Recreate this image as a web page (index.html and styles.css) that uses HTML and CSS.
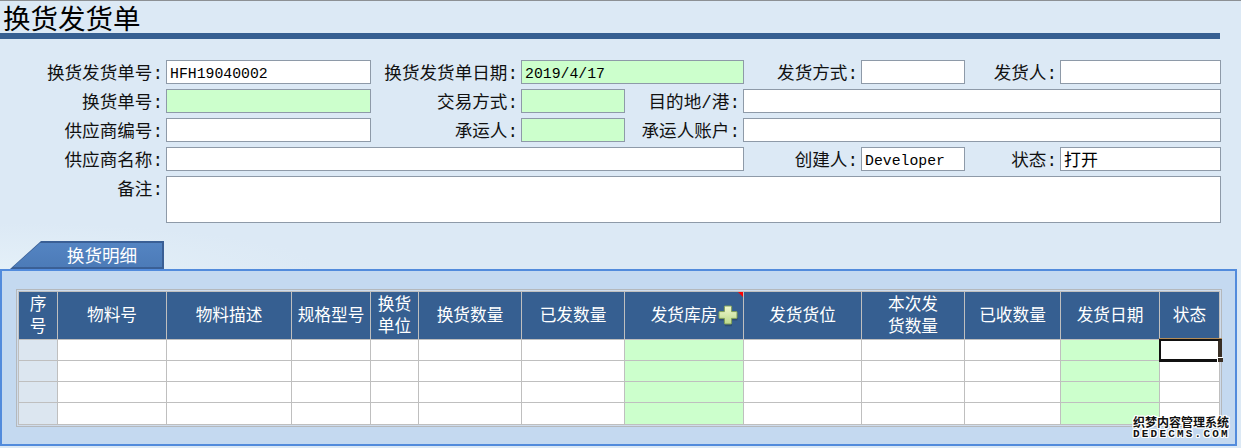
FILE: index.html
```html
<!DOCTYPE html>
<html lang="zh-CN">
<head>
<meta charset="utf-8">
<title>换货发货单</title>
<link rel="stylesheet" href="styles.css">
</head>
<body>
<h1 class="title">换货发货单</h1>
<form class="form">
  <label class="lb c-a">换货发货单号:</label>
  <input class="fld mono c-b" value="HFH19040002">
  <label class="lb c-c">换货发货单日期:</label>
  <input class="fld mono req c-de" value="2019/4/17">
  <label class="lb c-f">发货方式:</label>
  <input class="fld c-g">
  <label class="lb c-h">发货人:</label>
  <input class="fld c-i">

  <label class="lb c-a">换货单号:</label>
  <input class="fld req c-b">
  <label class="lb c-c">交易方式:</label>
  <input class="fld req c-d">
  <label class="lb c-e">目的地/港:</label>
  <input class="fld c-wide">

  <label class="lb c-a">供应商编号:</label>
  <input class="fld c-b">
  <label class="lb c-c">承运人:</label>
  <input class="fld req c-d">
  <label class="lb c-e">承运人账户:</label>
  <input class="fld c-wide">

  <label class="lb c-a">供应商名称:</label>
  <input class="fld c-name">
  <label class="lb c-f">创建人:</label>
  <input class="fld mono c-g" value="Developer">
  <label class="lb c-h">状态:</label>
  <input class="fld cjk c-i" value="打开">

  <label class="lb c-a">备注:</label>
  <textarea class="fld c-note"></textarea>
</form>

<div class="tabstrip"><div class="tab"><span class="tab-text">换货明细</span></div></div>

<section class="panel">
  <div class="gridwrap">
    <table class="grid">
      <colgroup>
        <col class="w39"><col class="w109"><col class="w125"><col class="w79"><col class="w48"><col class="w103"><col class="w103"><col class="w119"><col class="w118"><col class="w103"><col class="w96"><col class="w99"><col class="w60">
      </colgroup>
      <thead>
        <tr>
          <th>序<br>号</th><th>物料号</th><th>物料描述</th><th>规格型号</th><th>换货<br>单位</th><th>换货数量</th><th>已发数量</th>
          <th class="has-add">发货库房<i class="flag"></i>
            <svg class="plus" viewBox="0 0 22 22" width="22" height="22" aria-hidden="true">
              <defs><linearGradient id="pg" x1="0" y1="0" x2="0" y2="1"><stop offset="0" stop-color="#f0f8cf"/><stop offset="1" stop-color="#bcd98c"/></linearGradient></defs>
              <path d="M8 2h6a.6.6 0 0 1 .6.6V7.6h4.8a.6.6 0 0 1 .6.6v5.6a.6.6 0 0 1-.6.6h-4.8v5a.6.6 0 0 1-.6.6H8a.6.6 0 0 1-.6-.6v-5H2.6a.6.6 0 0 1-.6-.6V8.2a.6.6 0 0 1 .6-.6h4.8V2.6A.6.6 0 0 1 8 2z" fill="#24384f" opacity=".45" transform="translate(.4 1.2)"/>
              <path d="M8 1h6a.6.6 0 0 1 .6.6V6.6h4.8a.6.6 0 0 1 .6.6v5.6a.6.6 0 0 1-.6.6h-4.8v5a.6.6 0 0 1-.6.6H8a.6.6 0 0 1-.6-.6v-5H2.6a.6.6 0 0 1-.6-.6V7.2a.6.6 0 0 1 .6-.6h4.8V1.6A.6.6 0 0 1 8 1z" fill="url(#pg)" stroke="#7f9f58" stroke-width="1"/>
            </svg>
          </th>
          <th>发货货位</th><th>本次发<br>货数量</th><th>已收数量</th><th>发货日期</th><th>状态</th>
        </tr>
      </thead>
      <tbody>
        <tr class="r"><td class="no"></td><td></td><td></td><td></td><td></td><td></td><td></td><td class="req"></td><td></td><td></td><td></td><td class="req"></td><td class="sel-cell"><i class="sel"><b class="handle"></b></i></td></tr>
        <tr class="r"><td class="no"></td><td></td><td></td><td></td><td></td><td></td><td></td><td class="req"></td><td></td><td></td><td></td><td class="req"></td><td></td></tr>
        <tr class="r"><td class="no"></td><td></td><td></td><td></td><td></td><td></td><td></td><td class="req"></td><td></td><td></td><td></td><td class="req"></td><td></td></tr>
        <tr class="r last"><td class="no"></td><td></td><td></td><td></td><td></td><td></td><td></td><td class="req"></td><td></td><td></td><td></td><td class="req"></td><td></td></tr>
      </tbody>
    </table>
  </div>
</section>

<div class="mark"><span class="mark-cn">织梦内容管理系统</span><span class="mark-en">DEDECMS.COM</span></div>
</body>
</html>
```

FILE: styles.css
```css
* { box-sizing: border-box; }
html, body { margin: 0; padding: 0; }
body {
  position: relative;
  height: 448px;
  overflow: hidden;
  background: #dce9f5;
  border-top: 1px solid #8c9094;
  color: #000;
  font-family: "Liberation Mono", "Noto Sans CJK SC", monospace;
}
.title {
  margin: 0;
  width: 1220px;
  height: 38px;
  padding: 0 0 0 3px;
  border-bottom: 6px solid #365f91;
  font: 400 27.5px/32px "Noto Sans CJK SC", sans-serif;
  color: #000;
}
.form {
  display: grid;
  grid-template-columns: 166px 205px 150px 104px 118px 1px 117px 104px 95px 161px;
  grid-template-rows: 24px 24px 24px 24px 47px;
  row-gap: 5px;
  margin-top: 21px;
  width: 1221px;
  height: 163px;
}
.lb {
  font-size: 17.6px;
  line-height: 27px;
  padding-top: 1px;
  padding-right: 3px;
  text-align: right;
  white-space: nowrap;
  color: #111;
}
.fld {
  display: block;
  width: 100%;
  height: 100%;
  margin: 0;
  padding: 3px 3px 0;
  border: 1px solid #8e9aa8;
  border-radius: 0;
  background: #fff;
  color: #000;
  outline: none;
  resize: none;
}
.mono { font: 400 14.8px "Liberation Mono", monospace; }
.cjk { font: 400 17px "Noto Sans CJK SC", sans-serif; padding: 0 3px 2px; }
.req { background: #ccffcc; }
.c-a { grid-column: 1; }
.c-b { grid-column: 2; }
.c-c { grid-column: 3; }
.c-d { grid-column: 4; }
.c-de { grid-column: 4 / 7; }
.c-e { grid-column: 5; }
.c-f { grid-column: 7; }
.c-g { grid-column: 8; }
.c-h { grid-column: 9; }
.c-i { grid-column: 10; }
.c-wide { grid-column: 6 / 11; }
.c-name { grid-column: 2 / 7; }
.c-note { grid-column: 2 / 11; }

.tabstrip {
  height: 46px;
  padding: 18px 0 0 10px;
  background: radial-gradient(ellipse 320px 46px at 0 100%, #e4f0f8, #dce9f5);
}
.tab {
  position: relative;
  width: 154px;
  height: 28px;
  background: #3a5f95;
  clip-path: polygon(0 100%, 31px 0, 100% 0, 100% 100%);
  text-align: center;
}
.tab::before {
  content: "";
  position: absolute;
  left: 3px;
  top: 2px;
  right: 2px;
  bottom: 2px;
  background: linear-gradient(180deg, #5484c2, #4c7bb8);
  clip-path: polygon(0 100%, 27px 0, 100% 0, 100% 100%);
}
.tab-text {
  position: relative;
  display: block;
  padding-left: 30px;
  font: 400 17.6px/28px "Noto Sans CJK SC", sans-serif;
  color: #fff;
}

.panel {
  width: 1237px;
  height: 177px;
  padding: 18px 0 0 14px;
  border: 2px solid #528bdc;
  background: #c4d9f0;
}
.gridwrap {
  width: 1206px;
  height: 138px;
  padding: 1px;
  border: 1px solid #b4b8bc;
  background: #cfdcec;
}
.grid {
  table-layout: fixed;
  width: 1202px;
  border-collapse: separate;
  border-spacing: 0;
  border-top: 1px solid #bfbfbf;
  border-left: 1px solid #bfbfbf;
  background: #fff;
}
.w39 { width: 39px; } .w109 { width: 109px; } .w125 { width: 125px; } .w79 { width: 79px; }
.w48 { width: 48px; } .w103 { width: 103px; } .w119 { width: 119px; } .w118 { width: 118px; }
.w96 { width: 96px; } .w99 { width: 99px; } .w60 { width: 60px; }
.grid th, .grid td {
  padding: 0;
  border-right: 1px solid #bfbfbf;
  border-bottom: 1px solid #bfbfbf;
}
.grid th {
  position: relative;
  height: 48px;
  padding-bottom: 3px;
  background: #365f91;
  color: #fff;
  font: 400 16.67px/22px "Noto Sans CJK SC", sans-serif;
  text-align: center;
  vertical-align: middle;
}
.r { height: 21px; }
.r.last { height: 22px; }
.grid td.no { background: #dce6f0; }
.grid td.req { background: #ccffcc; }
.flag {
  position: absolute;
  top: 0;
  right: 0;
  width: 5px;
  height: 5px;
  background: #ff0000;
  clip-path: polygon(0 0, 100% 0, 100% 100%);
}
.plus { position: absolute; left: 92px; top: 13px; }
.sel-cell { position: relative; }
.sel {
  position: absolute;
  left: -1px;
  top: -1px;
  width: 63px;
  height: 23px;
  border: 2px solid #111;
  border-right: 4px solid #3a3026;
  border-bottom-width: 3px;
  box-shadow: 0 -1px 0 #b48c58;
}
.handle {
  position: absolute;
  right: -5px;
  bottom: -3px;
  width: 6px;
  height: 5px;
  background: #3a3026;
  border-left: 1px solid #fff;
  border-top: 1px solid #fff;
}

.mark {
  position: absolute;
  left: 1133px;
  top: 413px;
  width: 100px;
  display: flex;
  flex-direction: column;
  color: #111;
  text-shadow: 1px 0 0 #fff, -1px 0 0 #fff, 0 1px 0 #fff, 0 -1px 0 #fff, 1px 1px 0 #fff, -1px -1px 0 #fff, 1px -1px 0 #fff, -1px 1px 0 #fff;
}
.mark-cn { font: 700 12px/15px "Noto Sans CJK SC", sans-serif; white-space: nowrap; }
.mark-en { font: 700 11px/10px "Liberation Mono", monospace; letter-spacing: 2.2px; white-space: nowrap; }
```
